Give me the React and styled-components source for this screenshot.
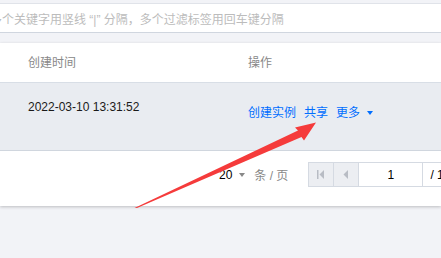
import React from "react";
import styled, { createGlobalStyle } from "styled-components";

const Global = createGlobalStyle`
  html, body { margin: 0; padding: 0; background: #f2f3f7; overflow: hidden; }
  body { font-family: "Liberation Sans", Arial, "Noto Sans CJK SC", sans-serif; font-size: 12px; }
`;

const Page = styled.div`
  position: relative;
  width: 441px;
  height: 258px;
  overflow: hidden;
  padding-top: 3px;
  box-sizing: border-box;
`;

const SearchBox = styled.div`
  margin: 0 -20px;
  height: 30px;
  box-sizing: border-box;
  background: #fff;
  border-top: 1px solid #e0e3e9;
  border-bottom: 1px solid #d0d6df;
  display: flex;
  align-items: center;
  padding-left: 10px;
  color: #bcbcbc;
  white-space: nowrap;
`;

const Card = styled.div`
  margin-top: 10px;
  background: #fff;
  box-shadow: 0 1px 3px rgba(0, 0, 0, 0.22);
`;

const Grid = styled.div`
  display: grid;
  grid-template-columns: 220px 1fr;
  padding-left: 28px;
  box-sizing: border-box;
  border-bottom: 1px solid ${(p) => p.$border};
  background: ${(p) => p.$bg};
  height: ${(p) => p.$h}px;
  align-items: ${(p) => p.$align};
`;

const HeadCell = styled.div`
  color: #888;
  line-height: 16px;
`;

const DateCell = styled.div`
  color: #1a1a1a;
  line-height: 16px;
  padding-top: 16px;
`;

const Actions = styled.div`
  display: flex;
  align-items: center;
  gap: 8px;
  padding-top: 22px;
  line-height: 16px;
`;

const Link = styled.span`
  color: #006eff;
  display: inline-flex;
  align-items: center;
  gap: 7px;
`;

const Caret = styled.span`
  width: 0;
  height: 0;
  border-left: 3.5px solid transparent;
  border-right: 3.5px solid transparent;
  border-top: 4px solid ${(p) => p.$color};
`;

const Footer = styled.div`
  display: flex;
  align-items: center;
  padding: 11px 0 19px 219px;
  white-space: nowrap;
`;

const PageSize = styled.div`
  display: flex;
  align-items: center;
  gap: 7px;
  color: #000;
`;

const Unit = styled.span`
  color: #888;
  margin-left: 2px;
`;

const Pager = styled.div`
  display: flex;
  margin-left: 20px;
  height: 25px;
`;

const PagerItem = styled.div`
  box-sizing: border-box;
  height: 25px;
  width: ${(p) => (p.$w ? `${p.$w}px` : "auto")};
  border: 1px solid #d5dae2;
  margin-left: ${(p) => (p.$first ? 0 : -1)}px;
  background: ${(p) => (p.$btn ? "#eceef2" : "#fff")};
  display: flex;
  align-items: center;
  justify-content: center;
  padding: ${(p) => (p.$pad ? "0 10px 0 7px" : 0)};
  color: #000;
`;

const Arrow = styled.svg`
  position: absolute;
  left: 0;
  top: 0;
  pointer-events: none;
`;

export default function App() {
  return (
    <Page>
      <Global />
      <SearchBox>多个关键字用竖线 “|” 分隔，多个过滤标签用回车键分隔</SearchBox>
      <Card>
        <Grid $h={40} $bg="#fff" $border="#d8dee6" $align="center">
          <HeadCell>创建时间</HeadCell>
          <HeadCell>操作</HeadCell>
        </Grid>
        <Grid $h={68} $bg="#e9ecf1" $border="#d0d6de" $align="start">
          <DateCell>2022-03-10 13:31:52</DateCell>
          <Actions>
            <Link>创建实例</Link>
            <Link>共享</Link>
            <Link>
              更多
              <Caret $color="#006eff" />
            </Link>
          </Actions>
        </Grid>
        <Footer>
          <PageSize>
            20
            <Caret $color="#888" />
            <Unit>条 / 页</Unit>
          </PageSize>
          <Pager>
            <PagerItem $first $btn $w={26}>
              <svg width="8" height="9" viewBox="0 0 8 9">
                <rect x="0" y="0" width="1.5" height="9" fill="#b8bcc4" />
                <path d="M7 0 L2.5 4.5 L7 9 Z" fill="#b8bcc4" />
              </svg>
            </PagerItem>
            <PagerItem $btn $w={26}>
              <svg width="6" height="9" viewBox="0 0 6 9">
                <path d="M5 0 L0.5 4.5 L5 9 Z" fill="#b8bcc4" />
              </svg>
            </PagerItem>
            <PagerItem $w={65}>1</PagerItem>
            <PagerItem $pad>/ 1</PagerItem>
          </Pager>
        </Footer>
      </Card>
      <Arrow width="441" height="258" viewBox="0 0 441 258">
        <polygon
          points="134.5,208 298,130.5 295,127.5 316,122.5 304,140.5 301.5,137 137,208"
          fill="#f53b3b"
        />
      </Arrow>
    </Page>
  );
}
